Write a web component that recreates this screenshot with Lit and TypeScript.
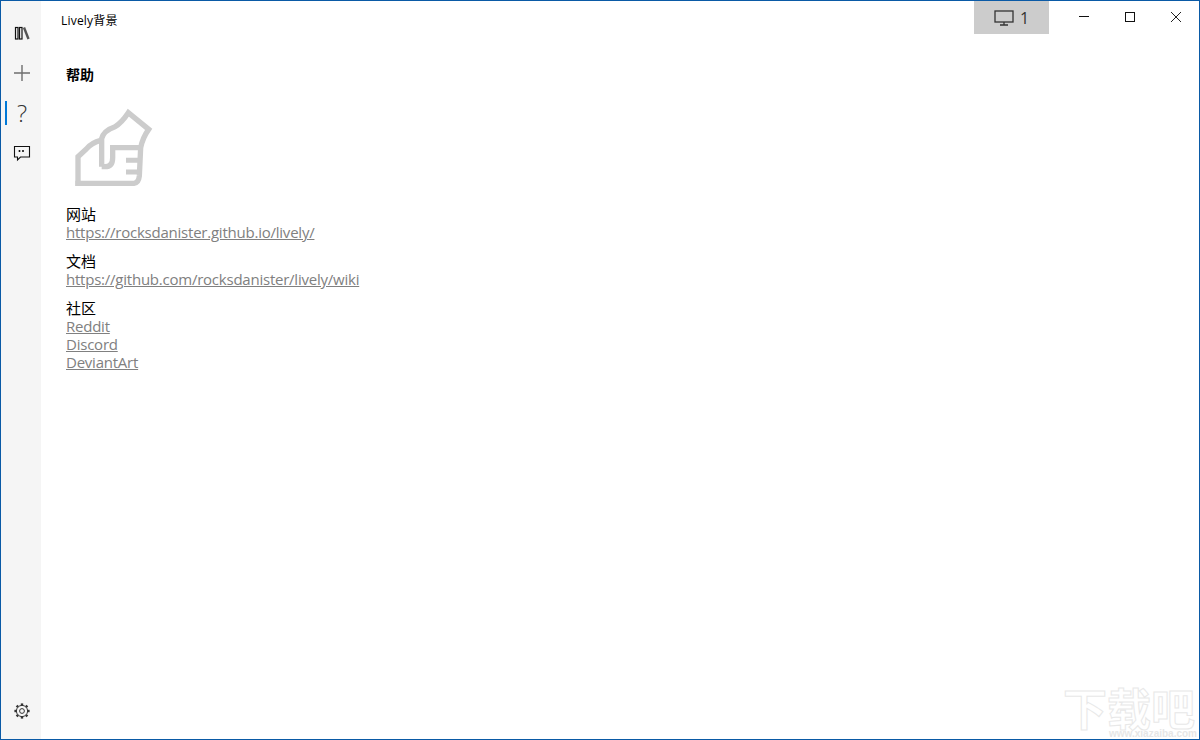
import { LitElement, html, css, svg } from "lit";
import { customElement } from "lit/decorators.js";

const gearTeeth = Array.from({ length: 8 }, (_, i) => i * 45);

@customElement("app-root")
export class AppRoot extends LitElement {
  static styles = css`
    :host {
      display: block;
      position: relative;
      width: 1200px;
      height: 740px;
      box-sizing: border-box;
      border: 1px solid #0a5aa6;
      background: #fff;
      overflow: hidden;
      font-family: "Open Sans", "Noto Sans CJK SC", sans-serif;
      color: #000;
    }
    .window { display: flex; height: 100%; }
    .rail {
      width: 40px;
      flex: none;
      background: #f5f5f5;
      display: flex;
      flex-direction: column;
      padding-top: 12px;
      box-sizing: border-box;
    }
    .nav {
      height: 40px;
      position: relative;
      display: flex;
      align-items: center;
      justify-content: center;
      padding-left: 2px;
      box-sizing: border-box;
    }
    .nav.active::before {
      content: "";
      position: absolute;
      left: 4px;
      top: 8px;
      width: 2px;
      height: 24px;
      background: #0078d7;
    }
    .nav svg { display: block; }
    .question {
      font: 300 24px/1 "Open Sans", sans-serif;
      color: #333;
    }
    .spacer { flex: 1; }
    .gear { margin-bottom: 8px; }
    .main { flex: 1; display: flex; flex-direction: column; min-width: 0; }
    .titlebar {
      height: 33px;
      flex: none;
      display: flex;
      align-items: flex-start;
    }
    .apptitle {
      margin: 12px 0 0 20px;
      font-size: 12px;
      line-height: 16px;
      flex: 1;
      letter-spacing: 0.2px;
    }
    .monitor {
      width: 75px;
      height: 33px;
      background: #cccccc;
      display: flex;
      align-items: center;
      justify-content: center;
      gap: 6px;
      font-size: 16px;
      color: #333;
    }
    .winbtn {
      width: 46px;
      height: 32px;
      display: flex;
      align-items: center;
      justify-content: center;
    }
    .monitor + .winbtn { margin-left: 12px; }
    .content { padding: 31px 0 0 25px; flex: 1; }
    h1 {
      margin: 0;
      font-size: 14px;
      line-height: 20px;
      font-weight: 700;
    }
    .logo { display: block; margin: 11px 0 9px -6px; }
    .group { display: flex; flex-direction: column; align-items: flex-start; margin-bottom: 11px; }
    .label { font-size: 15px; line-height: 18px; }
    a {
      font-size: 15px;
      line-height: 18px;
      color: #808080;
      text-decoration: underline;
      letter-spacing: -0.23px;
    }
    .watermark {
      position: absolute;
      right: 2px;
      bottom: 0;
      width: 134px;
      pointer-events: none;
    }
    .wm-big {
      font: 700 44px/44px "Noto Sans CJK SC", sans-serif;
      color: #fff;
      -webkit-text-stroke: 1px #e8e8e8;
      white-space: nowrap;
    }
    .wm-small {
      font: 700 10px/10px "Liberation Sans", sans-serif;
      color: #e6e6e6;
      white-space: nowrap;
      text-align: right;
    }
  `;

  render() {
    return html`
      <div class="window">
        <nav class="rail">
          <div class="nav">
            <svg width="18" height="18" viewBox="0 0 18 18" fill="none" stroke="#111" stroke-width="1.2">
              <rect x="2.5" y="3.5" width="2.5" height="11.5"/>
              <rect x="6.5" y="3.5" width="2.5" height="11.5"/>
              <path d="M11 3.5l4.5 11.5" stroke="#555" stroke-width="2.4"/>
            </svg>
          </div>
          <div class="nav">
            <svg width="18" height="18" viewBox="0 0 18 18" stroke="#6e6e6e" stroke-width="1.4">
              <path d="M9 1v16M1 9h16"/>
            </svg>
          </div>
          <div class="nav active"><span class="question">?</span></div>
          <div class="nav">
            <svg width="18" height="18" viewBox="0 0 18 18" fill="none" stroke="#111" stroke-width="1.1">
              <path d="M1.5 2.5h15v10.5h-9l-3 3v-3h-3z"/>
              <path d="M6.5 6v2M10 6v2" stroke-width="1.6"/>
            </svg>
          </div>
          <div class="spacer"></div>
          <div class="nav gear">
            <svg width="18" height="18" viewBox="0 0 18 18" fill="none" stroke="#333" stroke-width="1">
              <circle cx="9" cy="9" r="5.6"/>
              <circle cx="9" cy="9" r="2.4"/>
              ${gearTeeth.map(
                (a) => svg`<path d="M9 3.2V1.4" stroke-width="2.4" transform="rotate(${a} 9 9)"/>`
              )}
            </svg>
          </div>
        </nav>
        <div class="main">
          <header class="titlebar">
            <div class="apptitle">Lively背景</div>
            <div class="monitor">
              <svg width="20" height="16" viewBox="0 0 20 16" fill="none" stroke="#333" stroke-width="1.3">
                <rect x="1" y="1" width="18" height="11"/>
                <path d="M10 12v3M6 15h8"/>
              </svg>
              <span>1</span>
            </div>
            <div class="winbtn">
              <svg width="12" height="12" viewBox="0 0 12 12" stroke="#111"><path d="M1 5.5h10"/></svg>
            </div>
            <div class="winbtn">
              <svg width="12" height="12" viewBox="0 0 12 12" fill="none" stroke="#111"><rect x="1.5" y="1.5" width="9" height="9"/></svg>
            </div>
            <div class="winbtn">
              <svg width="12" height="12" viewBox="0 0 12 12" stroke="#222" fill="none"><path d="M1 1l10 10M11 1L1 11"/></svg>
            </div>
          </header>
          <section class="content">
            <h1>帮助</h1>
            <svg class="logo" width="110" height="100" viewBox="0 0 330 300" fill="none" stroke="#cccccc" stroke-width="16" stroke-linejoin="miter">
              <path d="M54 270V182L80 158Q95 140 122 133"/>
              <path d="M125 212V128Q130 104 165 92Q185 80 205 50L266 100Q248 125 242 155L238 240Q236 260 222 262H46"/>
              <path d="M125 212H135Q158 212 158 185V155H242"/>
              <path d="M198 193H238M198 228H238" stroke-width="15"/>
            </svg>
            <div class="group">
              <span class="label">网站</span>
              <a href="#">https://rocksdanister.github.io/lively/</a>
            </div>
            <div class="group">
              <span class="label">文档</span>
              <a href="#">https://github.com/rocksdanister/lively/wiki</a>
            </div>
            <div class="group">
              <span class="label">社区</span>
              <a href="#">Reddit</a>
              <a href="#">Discord</a>
              <a href="#">DeviantArt</a>
            </div>
          </section>
        </div>
      </div>
      <div class="watermark">
        <div class="wm-big">下载吧</div>
        <div class="wm-small">www.xiazaiba.com</div>
      </div>
    `;
  }
}
